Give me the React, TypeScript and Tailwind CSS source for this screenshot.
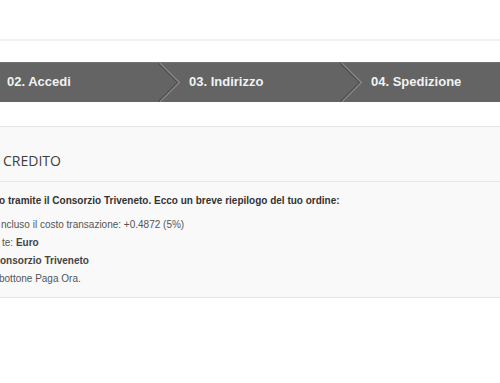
import React from "react";

const Chevron = () => (
  <svg width="22" height="40" viewBox="0 0 22 40" className="shrink-0 block">
    <polyline points="-0.5,0 20,20.5 0.5,40" fill="none" stroke="#4a4a4a" strokeWidth="1.6" />
    <polyline points="0.8,0 21.3,20.5 1.8,40" fill="none" stroke="#8a8a8a" strokeWidth="1.2" />
  </svg>
);

const Step = ({ label }: { label: string }) => (
  <div className="flex h-[40px] w-[182px] shrink-0 items-center">
    <div className="flex-1 pl-[9px] text-[13px] font-bold text-[#f2f2f2] leading-[40px] whitespace-nowrap">
      {label}
    </div>
    <Chevron />
  </div>
);

export default function App() {
  return (
    <div
      className="w-[500px] h-[383px] overflow-hidden bg-white"
      style={{ fontFamily: '"Liberation Sans", Arial, sans-serif' }}
    >
      <div className="h-[39px]" />
      <div className="h-[2px] bg-[#f0f0f0]" />
      <div className="h-[21px]" />
      <div className="h-[40px] bg-[#646464] border-t border-[#737373] overflow-hidden">
        <div className="flex -ml-[2px] -mt-[1px]">
          <Step label="02. Accedi" />
          <Step label="03. Indirizzo" />
          <Step label="04. Spedizione" />
        </div>
      </div>
      <div className="h-[24px]" />
      <div className="border-y border-[#e6e6e6] bg-[#f9f9f9]">
        <div
          className="h-[55px] pt-[24px] pl-[3px] text-[14px] leading-[20px] text-[#404040] border-b border-[#e6e6e6]"
          style={{ fontFamily: '"Open Sans", sans-serif' }}
        >
          CREDITO
        </div>
        <div className="pt-[10px] pb-[9px] text-[10px] text-[#555555] whitespace-nowrap">
          <div className="leading-[18px] font-bold text-[#333333] -ml-[1px]">
            o tramite il Consorzio Triveneto. Ecco un breve riepilogo del tuo ordine:
          </div>
          <div className="mt-[6px] leading-[18px] pl-[1px]">ncluso il costo transazione: +0.4872 (5%)</div>
          <div className="leading-[18px] pl-[2px]">
            te: <span className="font-bold text-[#444444]">Euro</span>
          </div>
          <div className="leading-[18px] font-bold text-[#444444]">onsorzio Triveneto</div>
          <div className="leading-[18px] -ml-[1px]">bottone Paga Ora.</div>
        </div>
      </div>
    </div>
  );
}
